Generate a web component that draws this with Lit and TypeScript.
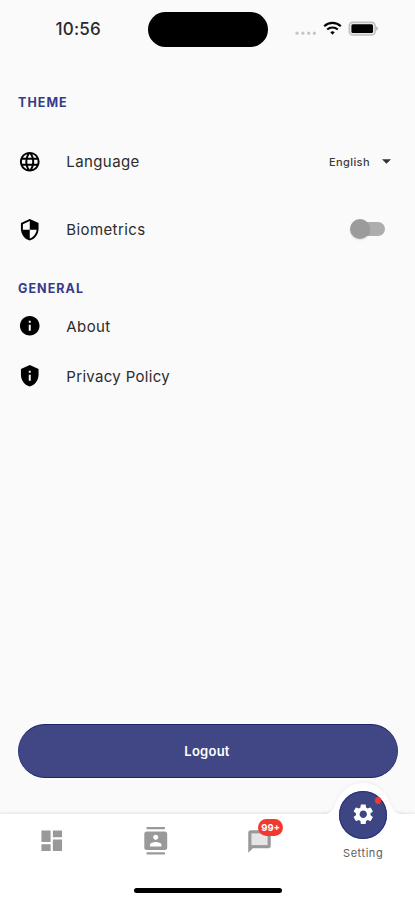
import { LitElement, html, css, svg } from "lit";
import { customElement } from "lit/decorators.js";

const icons: Record<string, string> = {
  globe:
    "M11.99 2C6.47 2 2 6.48 2 12s4.47 10 9.99 10C17.52 22 22 17.52 22 12S17.52 2 11.99 2zm6.93 6h-2.95c-.32-1.25-.78-2.45-1.38-3.56 1.84.63 3.37 1.91 4.33 3.56zM12 4.04c.83 1.2 1.48 2.53 1.91 3.96h-3.82c.43-1.43 1.08-2.76 1.91-3.96zM4.26 14C4.1 13.36 4 12.69 4 12s.1-1.36.26-2h3.38c-.08.66-.14 1.32-.14 2s.06 1.34.14 2H4.26zm.82 2h2.95c.32 1.25.78 2.45 1.38 3.56-1.84-.63-3.37-1.9-4.33-3.56zm2.95-8H5.08c.96-1.66 2.49-2.93 4.33-3.56C8.81 5.55 8.35 6.75 8.03 8zM12 19.96c-.83-1.2-1.48-2.53-1.91-3.96h3.82c-.43 1.43-1.08 2.76-1.91 3.96zM14.34 14H9.66c-.09-.66-.16-1.32-.16-2s.07-1.35.16-2h4.68c.09.65.16 1.32.16 2s-.07 1.34-.16 2zm.25 5.56c.6-1.11 1.06-2.31 1.38-3.56h2.95c-.96 1.65-2.49 2.93-4.33 3.56zM16.36 14c.08-.66.14-1.32.14-2s-.06-1.34-.14-2h3.38c.16.64.26 1.31.26 2s-.1 1.36-.26 2h-3.38z",
  security:
    "M12 1L3 5v6c0 5.55 3.84 10.74 9 12 5.16-1.26 9-6.45 9-12V5l-9-4zm0 10.99h7c-.53 4.12-3.28 7.79-7 8.94V12H5V6.3l7-3.11v8.8z",
  info: "M12 2C6.48 2 2 6.48 2 12s4.48 10 10 10 10-4.48 10-10S17.52 2 12 2zm1 15h-2v-6h2v6zm0-8h-2V7h2v2z",
  privacy: "M12 1L3 5v6c0 5.55 3.84 10.74 9 12 5.16-1.26 9-6.45 9-12V5l-9-4zm1 16h-2v-6h2v6zm0-8h-2V7h2v2z",
  dashboard: "M3 13h8V3H3v10zm0 8h8v-6H3v6zm10 0h8V11h-8v10zm0-18v6h8V3h-8z",
  contacts:
    "M20 0H4v2h16V0zM4 24h16v-2H4v2zM20 4H4c-1.1 0-2 .9-2 2v12c0 1.1.9 2 2 2h16c1.1 0 2-.9 2-2V6c0-1.1-.9-2-2-2zm-8 2.75c1.24 0 2.25 1.01 2.25 2.25s-1.01 2.25-2.25 2.25S9.75 10.24 9.75 9 10.76 6.75 12 6.75zM17 17H7v-1.5c0-1.67 3.33-2.5 5-2.5s5 .83 5 2.5V17z",
  settings:
    "M19.14 12.94c.04-.3.06-.61.06-.94 0-.32-.02-.64-.07-.94l2.03-1.58c.18-.14.23-.41.12-.61l-1.92-3.32c-.12-.22-.37-.29-.59-.22l-2.39.96c-.5-.38-1.03-.7-1.62-.94l-.36-2.54c-.04-.24-.24-.41-.48-.41h-3.84c-.24 0-.43.17-.47.41l-.36 2.54c-.59.24-1.13.57-1.62.94l-2.39-.96c-.22-.08-.47 0-.59.22L2.74 8.87c-.12.21-.08.47.12.61l2.03 1.58c-.05.3-.09.63-.09.94s.02.64.07.94l-2.03 1.58c-.18.14-.23.41-.12.61l1.92 3.32c.12.22.37.29.59.22l2.39-.96c.5.38 1.03.7 1.62.94l.36 2.54c.05.24.24.41.48.41h3.84c.24 0 .44-.17.47-.41l.36-2.54c.59-.24 1.13-.56 1.62-.94l2.39.96c.22.08.47 0 .59-.22l1.92-3.32c.12-.22.07-.47-.12-.61l-2.01-1.58zM12 15.6c-1.98 0-3.6-1.62-3.6-3.6s1.62-3.6 3.6-3.6 3.6 1.62 3.6 3.6-1.62 3.6-3.6 3.6z",
};

const icon = (name: string, cls = "icon") =>
  html`<svg class=${cls} viewBox="0 0 24 24">${svg`<path d=${icons[name]} />`}</svg>`;

@customElement("status-bar")
class StatusBar extends LitElement {
  static styles = css`
    :host { display: flex; height: 58px; box-sizing: border-box; align-items: center; color: #111; }
    .time { width: 147.5px; box-sizing: border-box; padding-left: 55.5px; font-size: 17px; font-weight: 500; letter-spacing: 0.2px; color: #2a2a2a; }
    .island { width: 120.5px; height: 35px; border-radius: 18px; background: #000; flex: none; }
    .signals { display: flex; margin-left: 26px; height: 18px; }
    svg { display: block; }
  `;
  render() {
    return html`
      <div class="time">10:56</div>
      <div class="island"></div>
      <div class="signals">
        <svg width="84" height="18" viewBox="0 0 84 18">
          <g fill="#c4c4c4">
            <circle cx="3" cy="13.2" r="1.6" /><circle cx="8.9" cy="13.2" r="1.6" />
            <circle cx="14.7" cy="13.2" r="1.6" /><circle cx="20.4" cy="13.2" r="1.6" />
          </g>
          <g fill="none" stroke="#050505" stroke-width="2.1">
            <path d="M30.2 6.2a12 12 0 0 1 16.6 0" />
            <path d="M33.2 9.6a7.6 7.6 0 0 1 10.6 0" />
          </g>
          <path d="M36.3 12.3a3.4 3.4 0 0 1 4.4 0L38.5 14.8z" fill="#050505" />
          <rect x="55.2" y="2.2" width="26" height="12.8" rx="3.6" fill="#e6e6e6" stroke="#bebebe" stroke-width="1.4" />
          <rect x="57.4" y="4.3" width="21.6" height="8.6" rx="1.5" fill="#000" />
          <path d="M82.2 6.3q1.8.8 1.8 2.2T82.2 10.7z" fill="#b5b5b5" />
        </svg>
      </div>
    `;
  }
}

@customElement("nav-bar")
class NavBar extends LitElement {
  static styles = css`
    :host { display: block; position: relative; height: 86px; background: #fff; box-shadow: 0 -1px 3px rgba(0, 0, 0, 0.09); }
    .bump { position: absolute; left: 313px; top: -36px; width: 100px; height: 50px; overflow: visible; }
    .bump path { fill: #fff; filter: drop-shadow(0 -1px 1.5px rgba(0, 0, 0, 0.05)); }
    .base { position: absolute; inset: 0; background: #fff; }
    .items { position: relative; display: grid; grid-template-columns: repeat(4, 103.75px); height: 54px; align-items: center; justify-items: center; }
    .item { position: relative; display: flex; left: 0.3px; }
    .item svg { fill: #999; display: block; }
    .dash { width: 27.5px; height: 27.5px; }
    .contacts { width: 27.5px; height: 27.5px; }
    .chat { width: 27px; height: 27px; }
    .badge { position: absolute; left: 12px; top: -9px; width: 25px; height: 17.5px; border-radius: 9px; background: #f1392f; color: #fff; font-size: 9.5px; font-weight: 700; line-height: 18px; text-align: center; }
    .active { position: relative; align-self: start; display: flex; flex-direction: column; align-items: center; margin-top: -23.5px; }
    .disc { position: relative; width: 48px; height: 48px; border-radius: 50%; background: #3d4583; box-shadow: inset 0 0 0 1px #29317a; display: grid; place-items: center; }
    .gear { width: 24.5px; height: 24.5px; fill: #fff; }
    .dot { position: absolute; right: 6px; top: 6.5px; width: 6.5px; height: 6.5px; border-radius: 50%; background: #f0382f; }
    .label { margin-top: 7.4px; font-size: 11px; line-height: 14px; letter-spacing: 0.55px; color: #606060; }
    .home { position: absolute; left: 134px; top: 74px; width: 148px; height: 4.5px; border-radius: 3px; background: #000; }
  `;
  render() {
    return html`
      <svg class="bump" viewBox="0 0 100 50">
        <path d="M8 37C17 36 20 33 22 27C26 14 37 5 50 5S74 14 78 27C80 33 83 36 92 37V50H8z" />
      </svg>
      <div class="base"></div>
      <div class="items">
        <div class="item">${icon("dashboard", "dash")}</div>
        <div class="item">${icon("contacts", "contacts")}</div>
        <div class="item">
          <svg class="chat" viewBox="0 0 24 24">
            <path d="M20 2H4c-1.1 0-2 .9-2 2v18l4-4h14c1.1 0 2-.9 2-2V4c0-1.1-.9-2-2-2z" />
            <rect x="4.8" y="4.8" width="14.4" height="10.4" fill="#e5e5e5" />
          </svg>
          <span class="badge">99+</span>
        </div>
        <div class="active">
          <div class="disc">${icon("settings", "gear")}<span class="dot"></span></div>
          <span class="label">Setting</span>
        </div>
      </div>
      <div class="home"></div>
    `;
  }
}

@customElement("app-root")
class AppRoot extends LitElement {
  static styles = css`
    :host { display: flex; flex-direction: column; height: 900px; width: 415px; overflow: hidden; background: #fafafa; font-family: Inter, "Liberation Sans", sans-serif; color: #222; }
    main { flex: 1; display: flex; flex-direction: column; padding: 0 17px 36.5px 18px; }
    h2 { margin: 0; height: 16px; line-height: 16px; font-size: 12.5px; font-weight: 700; letter-spacing: 1.05px; color: #353b8a; }
    .theme { margin-top: 37px; }
    .general { margin-top: 18px; }
    .row { display: flex; align-items: center; color: #2c2c2c; font-size: 15px; letter-spacing: 0.4px; }
    .tall { height: 67.5px; }
    .first { margin-top: 17px; }
    .short { height: 50px; }
    .about { margin-top: 4px; }
    .privacy { letter-spacing: 0.32px; }
    .icon { width: 23.5px; height: 23.5px; margin: 0 25.3px 0 -0.5px; fill: #000; flex: none; }
    .name { flex: 1; }
    .select { display: flex; align-items: center; font-size: 11px; letter-spacing: 0.42px; font-weight: 500; color: #3a3a3a; margin-right: 7px; }
    .caret { width: 9px; height: 5px; margin-left: 12px; fill: #333; }
    .switch { position: relative; width: 35px; height: 20px; margin-right: 13px; display: flex; align-items: center; justify-content: flex-end; }
    .track { width: 29px; height: 14px; border-radius: 7px; background: #adadad; }
    .thumb { position: absolute; left: 0; top: 0; width: 20px; height: 20px; border-radius: 50%; background: #9b9b9b; box-shadow: 0 1px 2px rgba(0, 0, 0, 0.12); }
    .logout { margin: auto 0 0; width: 380px; height: 53.5px; padding: 0 2px 0 0; border: 1px solid #1c2470; border-left-color: #303878; border-right-color: #303878; border-radius: 27px; background: #404784; color: #fff; font: 600 13px Inter, "Liberation Sans", sans-serif; letter-spacing: 0.25px; }
  `;
  render() {
    return html`
      <status-bar></status-bar>
      <main>
        <h2 class="theme">THEME</h2>
        <div class="row tall first">
          ${icon("globe")}<span class="name">Language</span>
          <span class="select">English<svg class="caret" viewBox="0 0 10 5"><path d="M0 0h10L5 5z" /></svg></span>
        </div>
        <div class="row tall">
          ${icon("security")}<span class="name">Biometrics</span>
          <span class="switch"><span class="track"></span><span class="thumb"></span></span>
        </div>
        <h2 class="general">GENERAL</h2>
        <div class="row short about">${icon("info")}<span class="name">About</span></div>
        <div class="row short privacy">${icon("privacy")}<span class="name">Privacy Policy</span></div>
        <button class="logout">Logout</button>
      </main>
      <nav-bar></nav-bar>
    `;
  }
}
